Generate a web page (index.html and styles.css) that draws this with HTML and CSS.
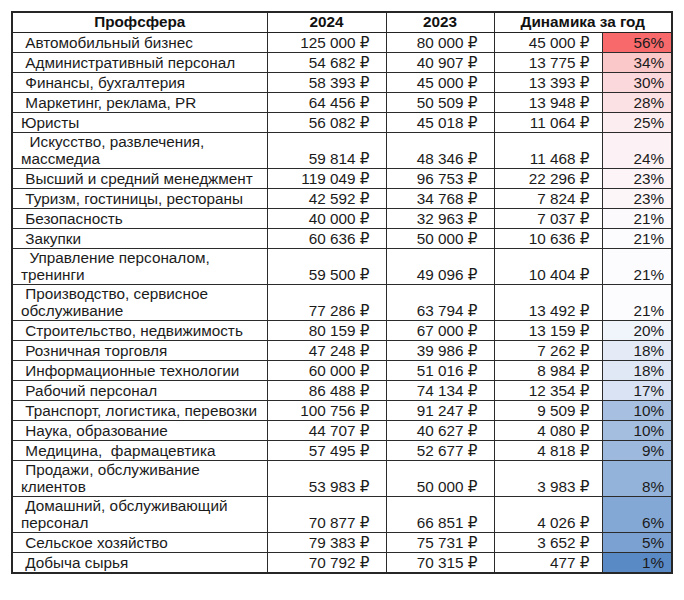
FILE: index.html
```html
<!DOCTYPE html>
<html lang="ru">
<head>
<meta charset="utf-8">
<title>Профсфера — зарплаты 2024/2023</title>
<link rel="stylesheet" href="styles.css">
</head>
<body>
<table class="sheet">
  <colgroup>
    <col class="w-name">
    <col class="w-y24">
    <col class="w-y23">
    <col class="w-diff">
    <col class="w-pct">
  </colgroup>
  <thead>
    <tr class="head">
      <th>Профсфера</th>
      <th>2024</th>
      <th>2023</th>
      <th colspan="2">Динамика за год</th>
    </tr>
  </thead>
  <tbody>
    <tr><td class="name"> Автомобильный бизнес</td><td class="y24">125 000 ₽</td><td class="y23">80 000 ₽</td><td class="diff">45 000 ₽</td><td class="pct" style="background:#F8696B">56%</td></tr>
    <tr><td class="name"> Административный персонал</td><td class="y24">54 682 ₽</td><td class="y23">40 907 ₽</td><td class="diff">13 775 ₽</td><td class="pct" style="background:#FBC8CA">34%</td></tr>
    <tr><td class="name"> Финансы, бухгалтерия</td><td class="y24">58 393 ₽</td><td class="y23">45 000 ₽</td><td class="diff">13 393 ₽</td><td class="pct" style="background:#FBD8DB">30%</td></tr>
    <tr><td class="name"> Маркетинг, реклама, PR</td><td class="y24">64 456 ₽</td><td class="y23">50 509 ₽</td><td class="diff">13 948 ₽</td><td class="pct" style="background:#FBE1E4">28%</td></tr>
    <tr><td class="name">Юристы</td><td class="y24">56 082 ₽</td><td class="y23">45 018 ₽</td><td class="diff">11 064 ₽</td><td class="pct" style="background:#FCEEF0">25%</td></tr>
    <tr class="dbl"><td class="name">  Искусство, развлечения,<br>массмедиа</td><td class="y24">59 814 ₽</td><td class="y23">48 346 ₽</td><td class="diff">11 468 ₽</td><td class="pct" style="background:#FCF1F4">24%</td></tr>
    <tr><td class="name"> Высший и средний менеджмент</td><td class="y24">119 049 ₽</td><td class="y23">96 753 ₽</td><td class="diff">22 296 ₽</td><td class="pct" style="background:#FCF4F7">23%</td></tr>
    <tr><td class="name"> Туризм, гостиницы, рестораны</td><td class="y24">42 592 ₽</td><td class="y23">34 768 ₽</td><td class="diff">7 824 ₽</td><td class="pct" style="background:#FCF6F9">23%</td></tr>
    <tr><td class="name"> Безопасность</td><td class="y24">40 000 ₽</td><td class="y23">32 963 ₽</td><td class="diff">7 037 ₽</td><td class="pct" style="background:#FCFAFD">21%</td></tr>
    <tr><td class="name"> Закупки</td><td class="y24">60 636 ₽</td><td class="y23">50 000 ₽</td><td class="diff">10 636 ₽</td><td class="pct" style="background:#FCFBFE">21%</td></tr>
    <tr class="dbl"><td class="name">  Управление персоналом,<br>тренинги</td><td class="y24">59 500 ₽</td><td class="y23">49 096 ₽</td><td class="diff">10 404 ₽</td><td class="pct" style="background:#FCFCFF">21%</td></tr>
    <tr class="dbl"><td class="name"> Производство, сервисное<br>обслуживание</td><td class="y24">77 286 ₽</td><td class="y23">63 794 ₽</td><td class="diff">13 492 ₽</td><td class="pct" style="background:#FCFCFF">21%</td></tr>
    <tr><td class="name"> Строительство, недвижимость</td><td class="y24">80 159 ₽</td><td class="y23">67 000 ₽</td><td class="diff">13 159 ₽</td><td class="pct" style="background:#F0F4FB">20%</td></tr>
    <tr><td class="name"> Розничная торговля</td><td class="y24">47 248 ₽</td><td class="y23">39 986 ₽</td><td class="diff">7 262 ₽</td><td class="pct" style="background:#E4EBF7">18%</td></tr>
    <tr><td class="name"> Информационные технологии</td><td class="y24">60 000 ₽</td><td class="y23">51 016 ₽</td><td class="diff">8 984 ₽</td><td class="pct" style="background:#E0E8F5">18%</td></tr>
    <tr><td class="name"> Рабочий персонал</td><td class="y24">86 488 ₽</td><td class="y23">74 134 ₽</td><td class="diff">12 354 ₽</td><td class="pct" style="background:#D9E3F3">17%</td></tr>
    <tr><td class="name"> Транспорт, логистика, перевозки</td><td class="y24">100 756 ₽</td><td class="y23">91 247 ₽</td><td class="diff">9 509 ₽</td><td class="pct" style="background:#A7C0E1">10%</td></tr>
    <tr><td class="name"> Наука, образование</td><td class="y24">44 707 ₽</td><td class="y23">40 627 ₽</td><td class="diff">4 080 ₽</td><td class="pct" style="background:#A4BEE0">10%</td></tr>
    <tr><td class="name"> Медицина,  фармацевтика</td><td class="y24">57 495 ₽</td><td class="y23">52 677 ₽</td><td class="diff">4 818 ₽</td><td class="pct" style="background:#9DB9DE">9%</td></tr>
    <tr class="dbl"><td class="name"> Продажи, обслуживание<br>клиентов</td><td class="y24">53 983 ₽</td><td class="y23">50 000 ₽</td><td class="diff">3 983 ₽</td><td class="pct" style="background:#94B3DA">8%</td></tr>
    <tr class="dbl"><td class="name"> Домашний, обслуживающий<br>персонал</td><td class="y24">70 877 ₽</td><td class="y23">66 851 ₽</td><td class="diff">4 026 ₽</td><td class="pct" style="background:#84A8D5">6%</td></tr>
    <tr><td class="name"> Сельское хозяйство</td><td class="y24">79 383 ₽</td><td class="y23">75 731 ₽</td><td class="diff">3 652 ₽</td><td class="pct" style="background:#7BA1D2">5%</td></tr>
    <tr><td class="name"> Добыча сырья</td><td class="y24">70 792 ₽</td><td class="y23">70 315 ₽</td><td class="diff">477 ₽</td><td class="pct" style="background:#5A8AC6">1%</td></tr>
  </tbody>
</table>
</body>
</html>
```
FILE: styles.css
```css
html, body {
  margin: 0;
  padding: 0;
  background: #ffffff;
}

body {
  font-family: "Liberation Sans", Arial, "DejaVu Sans", sans-serif;
  font-size: 15.3px;
  color: #1b1b1b;
}

.sheet {
  margin: 11px 0 0 11px;
  border-collapse: collapse;
  table-layout: fixed;
  width: 660px;
  border: 2px solid #262626;
}

.w-name { width: 255px; }
.w-y24  { width: 119px; }
.w-y23  { width: 108px; }
.w-diff { width: 108px; }
.w-pct  { width: 70px; }

.sheet th,
.sheet td {
  border: 1px solid #2b2b2b;
  padding: 2px 0 2px 0;
  line-height: 15px;
  vertical-align: bottom;
  white-space: pre;
  overflow: hidden;
}

.sheet th {
  font-weight: bold;
  text-align: center;
  color: #111111;
  padding: 1px 0 3px 0;
}

.sheet tr.head th {
  border-bottom: 1px solid #222222;
}

.sheet tr.dbl {
  height: 36px;
}

.sheet tr.dbl td {
  line-height: 17px;
  padding-top: 0;
  padding-bottom: 1px;
}

.name {
  text-align: left;
  padding-left: 8px !important;
}

.y24 {
  text-align: right;
  padding-right: 16px !important;
}

.y23 {
  text-align: right;
  padding-right: 16px !important;
}

.diff {
  text-align: right;
  padding-right: 12px !important;
}

.pct {
  text-align: right;
  padding-right: 7px !important;
}
```
